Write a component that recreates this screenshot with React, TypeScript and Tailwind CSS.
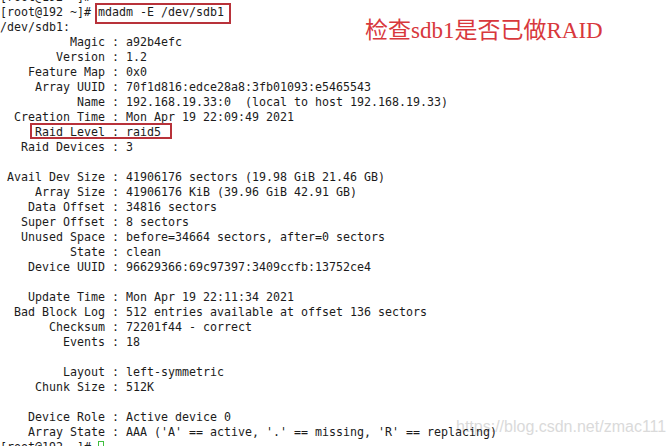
import React from "react";

const LINES = [
  "[root@192 ~]# ",
  "[root@192 ~]# mdadm -E /dev/sdb1",
  "/dev/sdb1:",
  "          Magic : a92b4efc",
  "        Version : 1.2",
  "    Feature Map : 0x0",
  "     Array UUID : 70f1d816:edce28a8:3fb01093:e5465543",
  "           Name : 192.168.19.33:0  (local to host 192.168.19.33)",
  "  Creation Time : Mon Apr 19 22:09:49 2021",
  "     Raid Level : raid5",
  "   Raid Devices : 3",
  "",
  " Avail Dev Size : 41906176 sectors (19.98 GiB 21.46 GB)",
  "     Array Size : 41906176 KiB (39.96 GiB 42.91 GB)",
  "    Data Offset : 34816 sectors",
  "   Super Offset : 8 sectors",
  "   Unused Space : before=34664 sectors, after=0 sectors",
  "          State : clean",
  "    Device UUID : 96629366:69c97397:3409ccfb:13752ce4",
  "",
  "    Update Time : Mon Apr 19 22:11:34 2021",
  "  Bad Block Log : 512 entries available at offset 136 sectors",
  "       Checksum : 72201f44 - correct",
  "         Events : 18",
  "",
  "         Layout : left-symmetric",
  "     Chunk Size : 512K",
  "",
  "    Device Role : Active device 0",
  "    Array State : AAA ('A' == active, '.' == missing, 'R' == replacing)",
  "[root@192 ~]# ",
];

export default function App() {
  return (
    <div className="relative w-[669px] h-[446px] overflow-hidden bg-white">
      {/* watermark sits under the terminal text */}
      <div className="absolute left-[456px] top-[415px] whitespace-nowrap text-[16px] text-[#dadada] font-['Liberation_Sans',Arial,sans-serif]">
        https://blog.csdn.net/zmac111
      </div>

      <div className="mt-[-10px] font-['DejaVu_Sans_Mono',monospace] text-[11.63px] text-[#1b1b1b]">
        {LINES.map((line, i) => (
          <div key={i} className="relative h-[15px] leading-[15px] whitespace-pre">
            {line}
            {i === 1 && (
              <span className="absolute left-[95px] top-[-2px] w-[136px] h-[21px] border-2 border-[#b8323a]" />
            )}
            {i === 9 && (
              <span className="absolute left-[30px] top-[-2px] w-[142px] h-[16px] border-2 border-[#b8323a]" />
            )}
            {i === 30 && (
              <span className="absolute left-[98px] top-[1px] w-[6px] h-[11px] border border-[#3fbf3f]" />
            )}
          </div>
        ))}
      </div>

      {/* annotation */}
      <div className="absolute left-[365px] top-[16px] whitespace-nowrap text-[23px] leading-[30px] text-[#d8383c] font-['Liberation_Serif','Noto_Sans_CJK_SC',serif]">
        检查sdb1是否已做RAID
      </div>
    </div>
  );
}
